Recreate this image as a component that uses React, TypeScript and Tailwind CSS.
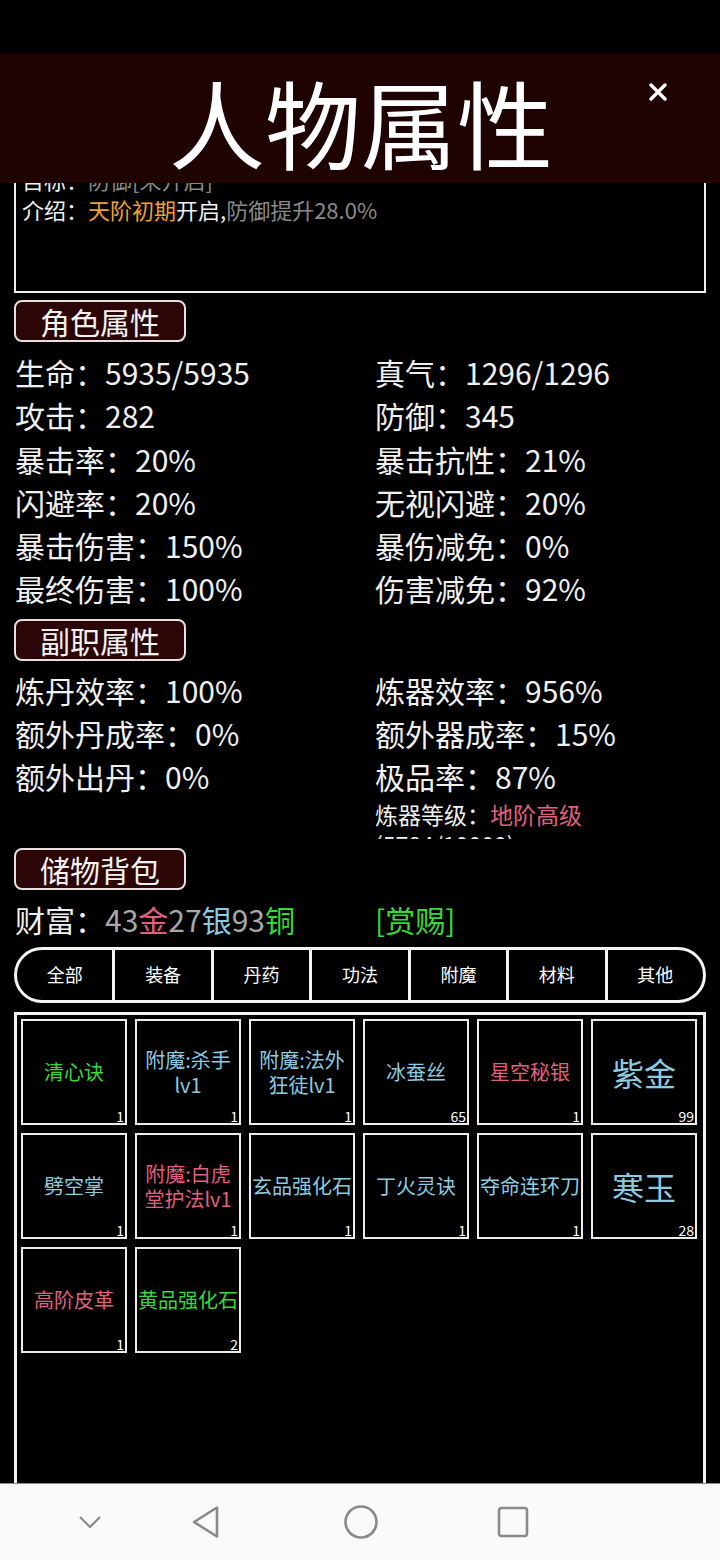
import React from 'react';

type Item = { lines: string[]; color: string; count: number; big?: boolean };

const GREEN = 'text-[#38d838]';
const BLUE = 'text-[#8ccae0]';
const PINK = 'text-[#e2607f]';

const items: Item[] = [
  { lines: ['清心诀'], color: GREEN, count: 1 },
  { lines: ['附魔:杀手', 'lv1'], color: BLUE, count: 1 },
  { lines: ['附魔:法外', '狂徒lv1'], color: BLUE, count: 1 },
  { lines: ['冰蚕丝'], color: BLUE, count: 65 },
  { lines: ['星空秘银'], color: PINK, count: 1 },
  { lines: ['紫金'], color: BLUE, count: 99, big: true },
  { lines: ['劈空掌'], color: BLUE, count: 1 },
  { lines: ['附魔:白虎', '堂护法lv1'], color: PINK, count: 1 },
  { lines: ['玄品强化石'], color: BLUE, count: 1 },
  { lines: ['丁火灵诀'], color: BLUE, count: 1 },
  { lines: ['夺命连环刀'], color: BLUE, count: 1 },
  { lines: ['寒玉'], color: BLUE, count: 28, big: true },
  { lines: ['高阶皮革'], color: PINK, count: 1 },
  { lines: ['黄品强化石'], color: GREEN, count: 2 },
];

const roleStats: [string, string][] = [
  ['生命：5935/5935', '真气：1296/1296'],
  ['攻击：282', '防御：345'],
  ['暴击率：20%', '暴击抗性：21%'],
  ['闪避率：20%', '无视闪避：20%'],
  ['暴击伤害：150%', '暴伤减免：0%'],
  ['最终伤害：100%', '伤害减免：92%'],
];

const jobStats: [string, string][] = [
  ['炼丹效率：100%', '炼器效率：956%'],
  ['额外丹成率：0%', '额外器成率：15%'],
  ['额外出丹：0%', '极品率：87%'],
];

const tabs = ['全部', '装备', '丹药', '功法', '附魔', '材料', '其他'];

function SectionLabel({ text, className = '' }: { text: string; className?: string }) {
  return (
    <div
      className={`w-[172px] h-[42px] rounded-[8px] border-2 border-[#e8dede] bg-[#2c0606] flex items-center justify-center text-[30px] leading-none text-[#f2f2f2] ${className}`}
    >
      {text}
    </div>
  );
}

function StatGrid({ rows }: { rows: [string, string][] }) {
  return (
    <div className="grid grid-cols-[361px_1fr] text-[30px] leading-[43.3px] text-[#f0f0f0]">
      {rows.map(([l, r]) => (
        <React.Fragment key={l}>
          <div className="pl-[1px] whitespace-nowrap">{l}</div>
          <div className="whitespace-nowrap">{r}</div>
        </React.Fragment>
      ))}
    </div>
  );
}

function ItemCell({ item }: { item: Item }) {
  return (
    <div className="relative w-[106px] h-[106px] border-2 border-[#ececec] flex flex-col items-center justify-center text-center">
      {item.lines.map((line) => (
        <div
          key={line}
          className={`${item.color} whitespace-nowrap ${item.big ? 'text-[32px] leading-[36px]' : 'text-[20px] leading-[25px]'}`}
        >
          {line}
        </div>
      ))}
      <span className="absolute right-[1px] bottom-[-2px] text-[14px] leading-[18px] text-white">
        {item.count}
      </span>
    </div>
  );
}

export default function App() {
  return (
    <div className="w-[720px] h-[1560px] bg-black flex flex-col overflow-hidden font-['Noto_Sans_CJK_SC','Noto_Sans',sans-serif]">
      <div className="h-[53px] shrink-0 bg-black" />

      <header className="relative h-[130px] shrink-0 bg-[#1f0202] flex items-center justify-center">
        <h1 className="text-[96px] leading-none text-white ml-[2px] mt-[6px]">人物属性</h1>
        <button className="absolute left-[649px] top-[30px] w-[18px] h-[18px]">
          <svg viewBox="0 0 18 18" className="w-[18px] h-[18px]">
            <path d="M2 2 L16 16 M16 2 L2 16" stroke="white" strokeWidth="3.4" strokeLinecap="round" />
          </svg>
        </button>
      </header>

      <main className="flex-1 min-h-0 overflow-hidden px-[14px]">
        <div className="-mt-[24px] h-[134px] border-2 border-[#f0f0f0] pt-[3px] px-[6px] text-[22px] leading-[30px]">
          <div className="text-[#f0f0f0]">
            目标：<span className="text-[#8a8a8a]">防御[未开启]</span>
          </div>
          <div className="text-[#f0f0f0]">
            介绍：<span className="text-[#f0a030]">天阶初期</span>开启,
            <span className="text-[#8a8a8a]">防御提升28.0%</span>
          </div>
        </div>

        <SectionLabel text="角色属性" className="mt-[7px]" />
        <div className="mt-[9px]">
          <StatGrid rows={roleStats} />
        </div>

        <SectionLabel text="副职属性" className="mt-[8px]" />
        <div className="mt-[8px]">
          <StatGrid rows={jobStats} />
          <div className="grid grid-cols-[361px_1fr]">
            <div />
            <div className="h-[40px] overflow-hidden text-[23px] leading-[30px] text-[#f0f0f0]">
              <div>
                炼器等级：<span className="text-[#e2607f]">地阶高级</span>
              </div>
              <div>(5784/10000)</div>
            </div>
          </div>
        </div>

        <SectionLabel text="储物背包" className="mt-[9px]" />
        <div className="mt-[8px] grid grid-cols-[361px_1fr] text-[30px] leading-[43.3px]">
          <div className="pl-[1px] whitespace-nowrap text-[#f0f0f0]">
            财富：<span className="text-[#a8a8a8]">43</span>
            <span className="text-[#e2607f]">金</span>
            <span className="text-[#a8a8a8]">27</span>
            <span className="text-[#8ccae0]">银</span>
            <span className="text-[#a8a8a8]">93</span>
            <span className="text-[#38d838]">铜</span>
          </div>
          <div className="text-[#38d838]">[赏赐]</div>
        </div>

        <div className="mt-[6px] h-[56px] rounded-full border-[3px] border-[#f4f4f4] overflow-hidden flex">
          {tabs.map((t, i) => (
            <div
              key={t}
              className={`flex-1 flex items-center justify-center text-[18px] text-white ${i > 0 ? 'border-l-[3px] border-[#f4f4f4]' : ''}`}
            >
              {t}
            </div>
          ))}
        </div>

        <div className="mt-[9px] h-[600px] border-[3px] border-[#f4f4f4] p-[4px]">
          <div className="grid grid-cols-[repeat(6,106px)] gap-[8px]">
            {items.map((it) => (
              <ItemCell key={it.lines.join('')} item={it} />
            ))}
          </div>
        </div>
      </main>

      <nav className="h-[77px] shrink-0 bg-[#fafafa] border-t border-[#8a8a8a] flex items-center">
        <svg viewBox="0 0 24 14" className="ml-[78px] w-[24px] h-[14px]">
          <path d="M2 2 L12 12 L22 2" fill="none" stroke="#8a8a8a" strokeWidth="2.2" />
        </svg>
        <svg viewBox="0 0 30 34" className="ml-[89px] w-[30px] h-[34px]">
          <path d="M26 2.5 L26 31.5 L3 17 Z" fill="none" stroke="#8a8a8a" strokeWidth="2.6" strokeLinejoin="round" />
        </svg>
        <svg viewBox="0 0 36 36" className="ml-[122px] w-[36px] h-[36px]">
          <circle cx="18" cy="18" r="15.5" fill="none" stroke="#8a8a8a" strokeWidth="2.6" />
        </svg>
        <svg viewBox="0 0 32 32" className="ml-[118px] w-[32px] h-[32px]">
          <rect x="2" y="2" width="28" height="28" rx="2.5" fill="none" stroke="#8a8a8a" strokeWidth="2.6" />
        </svg>
      </nav>
    </div>
  );
}
